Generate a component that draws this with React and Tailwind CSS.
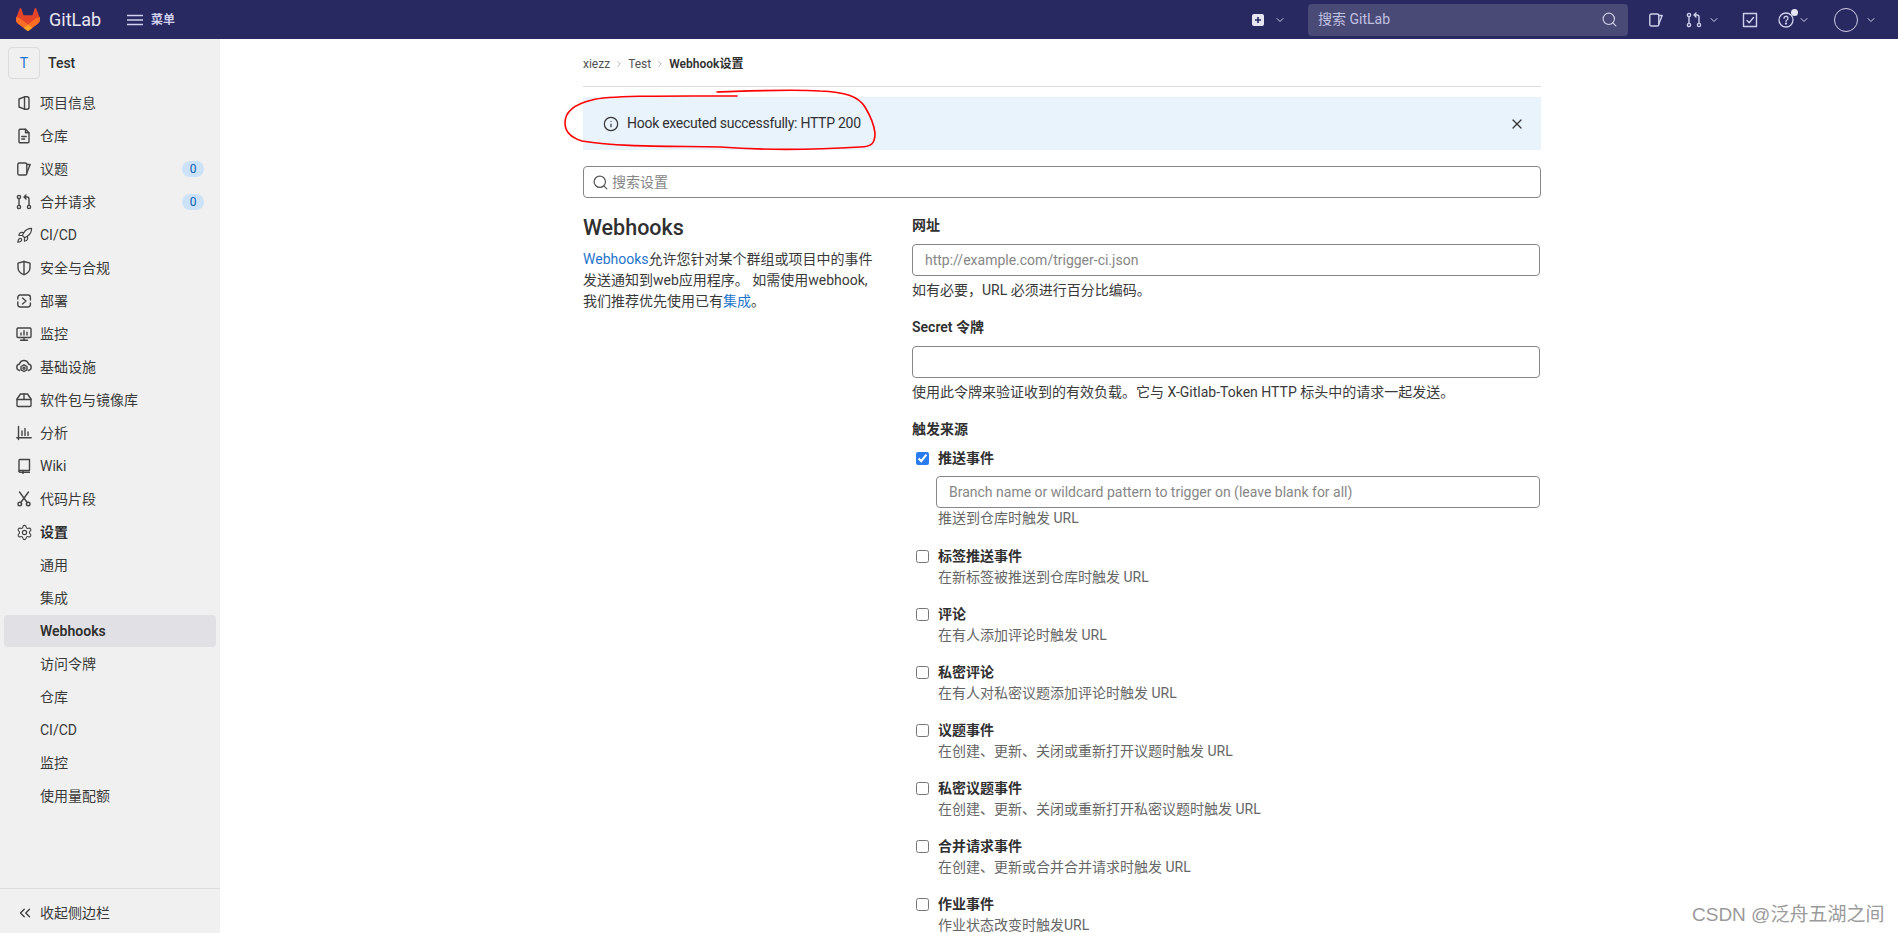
import React from "react";
import { Rocket, Settings, ChevronsLeft, ChevronDown, ChevronRight, Search, X, Info } from "lucide-react";

const S = ({ children, size = 16, className = "" }) => (
  <svg width={size} height={size} viewBox="0 0 16 16" fill="none" stroke="currentColor" strokeWidth="1.4" strokeLinecap="round" strokeLinejoin="round" className={"shrink-0 " + className}>{children}</svg>
);

const Icons = {
  project: <S><path d="M3 4 8.500 1.800v12.400L3 12z" /><path d="M8.500 1.800H11a2 2 0 0 1 2 2v8.400a2 2 0 0 1-2 2H8.500" /></S>,
  doc: <S><path d="M3 2.200a1 1 0 0 1 1-1h5.500L13 4.700v9.100a1 1 0 0 1-1 1H4a1 1 0 0 1-1-1z" /><path d="M9.500 1.200v3.500H13M5.800 8.500h4.400M5.800 11h2.800" /></S>,
  issue: <S><rect x="1.800" y="2" width="9" height="12" rx="1.600" /><path d="M10.800 3.500h3.400L10.800 12" /></S>,
  mr: <S><circle cx="3" cy="3" r="1.600" /><circle cx="3" cy="13" r="1.600" /><circle cx="13" cy="13" r="1.600" /><path d="M3 4.600v6.800M13 11.400V5a2 2 0 0 0-2-2H8.500M10 1 8 3l2 2" /></S>,
  rocket: <Rocket size={17} strokeWidth={1.7} className="shrink-0" />,
  shield: <S><path d="M8 1.500 14 3.200v4.300c0 3.600-2.600 6-6 7.200-3.400-1.200-6-3.600-6-7.200V3.200z" /><path d="M8 1.500v13" /></S>,
  deploy: <S><path d="M1.800 6V4.300a2.300 2.300 0 0 1 2.300-2.300h8a2.300 2.300 0 0 1 2.300 2.300V7M14.400 10v1.700a2.300 2.300 0 0 1-2.300 2.300h-8a2.300 2.300 0 0 1-2.300-2.300V9" /><path d="M6.500 5 10 8l-3.500 3" /></S>,
  monitor: <S><rect x="1" y="2" width="14" height="9.500" rx="1" /><path d="M8 11.500v2.800M4.500 14.300h7M5 9V7M8 9V4.800M11 9V6.200" /></S>,
  infra: <S><path d="M3.500 11.500C1.800 11 .8 9.800.8 8.200c0-1.600 1.100-2.900 2.700-3.200C4.100 2.800 5.900 1.500 8 1.500s3.900 1.300 4.500 3.500c1.600.3 2.700 1.600 2.700 3.200 0 1.600-1 2.800-2.700 3.300" /><path d="M8 5.800l3 1.700v3.300l-3 1.700-3-1.700V7.500z" /><circle cx="8" cy="9.200" r="1" /></S>,
  pkg: <S><path d="M4.500 2h7L15 7v6.500a1 1 0 0 1-1 1H2a1 1 0 0 1-1-1V7z" /><path d="M1 7.500h14M8 2v5.500" /></S>,
  chart: <S><path d="M2.500 1.500v13M.8 12.800h14.400M6 10.500V6M9 10.500V3.500M12 10.500V7" /></S>,
  book: <S><path d="M3 2.500a1 1 0 0 1 1-1h9.500v11H4a1 1 0 0 0-1 1z" /><path d="M3 13v-.1c0 .9.500 1.400 1.300 1.400h9.200M7 12.500v3" /></S>,
  snip: <S><circle cx="3.800" cy="13" r="1.800" /><circle cx="12.200" cy="13" r="1.800" /><path d="M3.500 1 11.200 11.500M12.500 1 4.800 11.500" /></S>,
  gear: <Settings size={17} strokeWidth={1.6} className="shrink-0" />,
};

const nav = [
  ["project", "项目信息"],
  ["doc", "仓库"],
  ["issue", "议题", "0"],
  ["mr", "合并请求", "0"],
  ["rocket", "CI/CD"],
  ["shield", "安全与合规"],
  ["deploy", "部署"],
  ["monitor", "监控"],
  ["infra", "基础设施"],
  ["pkg", "软件包与镜像库"],
  ["chart", "分析"],
  ["book", "Wiki"],
  ["snip", "代码片段"],
];
const sub = ["通用", "集成", "Webhooks", "访问令牌", "仓库", "CI/CD", "监控", "使用量配额"];

const events = [
  ["标签推送事件", "在新标签被推送到仓库时触发 URL"],
  ["评论", "在有人添加评论时触发 URL"],
  ["私密评论", "在有人对私密议题添加评论时触发 URL"],
  ["议题事件", "在创建、更新、关闭或重新打开议题时触发 URL"],
  ["私密议题事件", "在创建、更新、关闭或重新打开私密议题时触发 URL"],
  ["合并请求事件", "在创建、更新或合并合并请求时触发 URL"],
  ["作业事件", "作业状态改变时触发URL"],
];

const font = "font-['Roboto','Noto_Sans_CJK_SC',sans-serif]";

function TopBar() {
  return (
    <header className="h-[39px] shrink-0 bg-[#292961] flex items-center text-[#cfcfee]">
      <svg width="24" height="23" viewBox="0 0 25 24" className="ml-[16px] shrink-0">
        <path d="m24.507 9.5-.034-.09L21.082.562a.896.896 0 0 0-1.694.091l-2.29 7.01H7.825L5.535.653a.898.898 0 0 0-1.694-.09L.451 9.411.416 9.5a6.297 6.297 0 0 0 2.09 7.278l.012.01.03.022 5.16 3.867 2.56 1.935 1.554 1.176a1.051 1.051 0 0 0 1.268 0l1.555-1.176 2.56-1.935 5.197-3.89.014-.01A6.297 6.297 0 0 0 24.507 9.5Z" fill="#E24329" />
        <path d="m24.507 9.5-.034-.09a11.44 11.44 0 0 0-4.56 2.051l-7.447 5.632 4.742 3.584 5.197-3.89.014-.01A6.297 6.297 0 0 0 24.507 9.5Z" fill="#FC6D26" />
        <path d="m7.707 20.677 2.56 1.935 1.555 1.176a1.051 1.051 0 0 0 1.268 0l1.555-1.176 2.56-1.935-4.743-3.584-4.755 3.584Z" fill="#FCA326" />
        <path d="M5.01 11.461a11.43 11.43 0 0 0-4.56-2.05L.416 9.5a6.297 6.297 0 0 0 2.09 7.278l.012.01.03.022 5.16 3.867 4.745-3.584-7.444-5.632Z" fill="#FC6D26" />
      </svg>
      <span className="ml-[9px] text-[18px] text-[#e6e6f2] w-[52px]">GitLab</span>
      <svg width="16" height="12" viewBox="0 0 16 12" fill="none" stroke="currentColor" strokeWidth="1.6" className="ml-[26px] shrink-0"><path d="M0 1.500h16M0 6h16M0 10.500h16" /></svg>
      <span className="ml-[8px] text-[12px] font-semibold">菜单</span>

      <div className="ml-auto flex items-center">
        <svg width="12" height="12" viewBox="0 0 12 12" className="shrink-0"><rect width="12" height="12" rx="2" fill="#e6e6f2" /><path d="M6 3v6M3 6h6" stroke="#292961" strokeWidth="1.6" /></svg>
        <ChevronDown size={12} strokeWidth={2} className="ml-[10px]" />
        <div className="ml-[22px] w-[320px] h-8 rounded bg-[#4a4a77] flex items-center pl-[10px] pr-[10px] text-[14px] text-[#c0c0e0]">
          <span>搜索 GitLab</span>
          <Search size={17} strokeWidth={1.6} className="ml-auto text-[#d0d0e8]" />
        </div>
        <div className="ml-[20px]">{Icons.issue}</div>
        <div className="ml-[22px]">{Icons.mr}</div>
        <ChevronDown size={12} strokeWidth={2} className="ml-[6px]" />
        <S className="ml-[22px]"><path d="M1.500 1.500h13v13h-13zM5 8.500l2.200 2.200L11.500 5.500" /></S>
        <div className="relative ml-[20px]">
          <svg width="16" height="16" viewBox="0 0 16 16" fill="none" stroke="currentColor" strokeWidth="1.3"><circle cx="8" cy="8" r="7" /><path d="M6 6.300a2 2 0 1 1 3 1.700c-.7.4-1 .8-1 1.600" strokeLinecap="round" /><circle cx="8" cy="11.600" r=".5" /></svg>
          <span className="absolute -top-[3px] -right-[4px] w-[7px] h-[7px] rounded-full bg-[#e6e6f2]" />
        </div>
        <ChevronDown size={12} strokeWidth={2} className="ml-[4px]" />
        <div className="ml-[24px] w-6 h-6 rounded-full border border-[#d1d0e8]" />
        <ChevronDown size={12} strokeWidth={2} className="ml-[7px] mr-[21px]" />
      </div>
    </header>
  );
}

function Sidebar() {
  return (
    <aside className="w-[220px] shrink-0 bg-[#f0f0f0] flex flex-col text-[14px] text-[#303030]">
      <div className="flex items-center pt-2 pb-2 pl-2">
        <div className="w-8 h-8 rounded border border-[#dcdcde] flex items-center justify-center text-[#1f75cb] text-[14px]">T</div>
        <span className="ml-2 font-medium">Test</span>
      </div>
      <nav className="flex flex-col gap-px px-1">
        {nav.map(([ic, label, badge]) => (
          <div key={label} className="h-8 flex items-center pl-3 pr-3 text-[#3a3a3a]">
            <span className="text-[#444] w-4 flex justify-center">{Icons[ic]}</span>
            <span className="ml-2">{label}</span>
            {badge && <span className="ml-auto w-[22px] h-4 rounded-full bg-[#cbe2f9] text-[#0b5cad] text-[12px] flex items-center justify-center">{badge}</span>}
          </div>
        ))}
        <div className="h-8 flex items-center pl-3 font-semibold text-[#303030]">
          <span className="text-[#444] w-4 flex justify-center">{Icons.gear}</span>
          <span className="ml-2">设置</span>
        </div>
        {sub.map((s) => (
          <div key={s} className={"h-8 flex items-center pl-9 rounded " + (s === "Webhooks" ? "bg-[#e1e1e5] font-semibold text-[#303030]" : "text-[#3a3a3a]")}>{s}</div>
        ))}
      </nav>
      <div className="mt-auto h-[45px] border-t border-[#dcdcde] flex items-center pl-4 pt-[4px] text-[#3a3a3a]">
        <ChevronsLeft size={18} strokeWidth={1.7} className="shrink-0" />
        <span className="ml-[6px]">收起侧边栏</span>
      </div>
    </aside>
  );
}

function Event({ title, help }) {
  return (
    <div className="mt-4">
      <label className="h-[21px] flex items-center pl-1 font-semibold text-[#303030]">
        <input type="checkbox" className="w-[13px] h-[13px] m-0 shrink-0" />
        <span className="ml-[9px]">{title}</span>
      </label>
      <div className="h-[21px] ml-[26px] leading-[21px] text-[#666]">{help}</div>
    </div>
  );
}

function TextInput({ placeholder, className = "" }) {
  return <input placeholder={placeholder} className={"block w-full h-8 rounded border border-[#868686] px-3 text-[14px] outline-none placeholder:text-[#868686] " + className} />;
}

function Main() {
  return (
    <main className="flex-1 min-w-0 overflow-hidden text-[14px] text-[#303030]">
      <div className="ml-[363px] w-[958px]">
        <div className="h-[48px] border-b border-[#dcdcde] flex items-center text-[12px] pt-[3px] text-[#525252]">
          <span>xiezz</span>
          <span className="w-[18px] flex justify-center text-[#868686]"><ChevronRight size={10} strokeWidth={1.5} /></span>
          <span>Test</span>
          <span className="w-[18px] flex justify-center text-[#868686]"><ChevronRight size={10} strokeWidth={1.5} /></span>
          <span className="font-semibold text-[#303030]">Webhook设置</span>
        </div>

        <div className="mt-[10px] h-[53px] bg-[#e9f3fc] flex items-center pl-5 pr-4">
          <Info size={16} strokeWidth={1.8} className="text-[#333] shrink-0" />
          <span className="ml-2 tracking-[-0.27px]">Hook executed successfully: HTTP 200</span>
          <X size={16} strokeWidth={1.8} className="ml-auto text-[#333]" />
        </div>

        <div className="mt-4 h-8 rounded border border-[#868686] flex items-center pl-2 text-[#868686]">
          <Search size={17} strokeWidth={1.7} className="text-[#555] shrink-0" />
          <span className="ml-[3px]">搜索设置</span>
        </div>

        <div className="mt-[17px] flex">
          <section className="w-[298px] shrink-0">
            <h2 className="text-[21.500px] leading-[26px] font-medium text-[#303030]">Webhooks</h2>
            <p className="mt-[8px] leading-[21px] text-[#3a3a3a]">
              <span className="text-[#1f75cb]">Webhooks</span>允许您针对某个群组或项目中的事件<br />
              发送通知到web应用程序。 如需使用webhook,<br />
              我们推荐优先使用已有<span className="text-[#1f75cb]">集成</span>。
            </p>
          </section>
          <section className="ml-[31px] w-[628px] shrink-0">
            <div className="h-[21px] leading-[21px] font-semibold">网址</div>
            <TextInput placeholder="http://example.com/trigger-ci.json" className="mt-2" />
            <div className="h-[21px] mt-1 leading-[21px] text-[#3a3a3a]">如有必要，URL 必须进行百分比编码。</div>
            <div className="h-[21px] mt-4 leading-[21px] font-semibold">Secret 令牌</div>
            <TextInput className="mt-2" />
            <div className="h-[21px] mt-1 leading-[21px] text-[#3a3a3a]">使用此令牌来验证收到的有效负载。它与 X-Gitlab-Token HTTP 标头中的请求一起发送。</div>
            <div className="h-[21px] mt-4 leading-[21px] font-semibold">触发来源</div>
            <label className="mt-2 h-[21px] flex items-center pl-1 font-semibold">
              <input type="checkbox" defaultChecked className="w-[13px] h-[13px] m-0 shrink-0 accent-[#2b7bf0]" />
              <span className="ml-[9px]">推送事件</span>
            </label>
            <TextInput placeholder="Branch name or wildcard pattern to trigger on (leave blank for all)" className="mt-[7px] ml-6 !w-[604px]" />
            <div className="h-[21px] mb-[17px] ml-[26px] leading-[21px] text-[#666]">推送到仓库时触发 URL</div>
            {events.map(([t, h]) => <Event key={t} title={t} help={h} />)}
          </section>
        </div>
      </div>
    </main>
  );
}

export default function App() {
  return (
    <div className={"relative h-screen overflow-hidden flex flex-col bg-white " + font}>
      <TopBar />
      <div className="flex flex-1 min-h-0">
        <Sidebar />
        <Main />
      </div>
      <svg className="absolute left-0 top-0 pointer-events-none" width="1898" height="933" fill="none" stroke="#ff0000" strokeWidth="1.6" strokeLinecap="round">
        <path d="M737 96C680 96 610 95 592 100C575 104 565 112 565 123C565 132 572 138 582 141C620 147 660 146 720 147C760 150 810 150 860 147C872 147 875 143 875 133C874 124 868 112 865 107C858 96 845 92 820 91C790 89 750 91 717 92" />
      </svg>
      <span className="absolute left-[1692px] top-[904px] text-[19px] leading-[22px] text-[#9a9a9a] font-['Liberation_Sans','Noto_Sans_CJK_SC',sans-serif]">CSDN @泛舟五湖之间</span>
    </div>
  );
}
